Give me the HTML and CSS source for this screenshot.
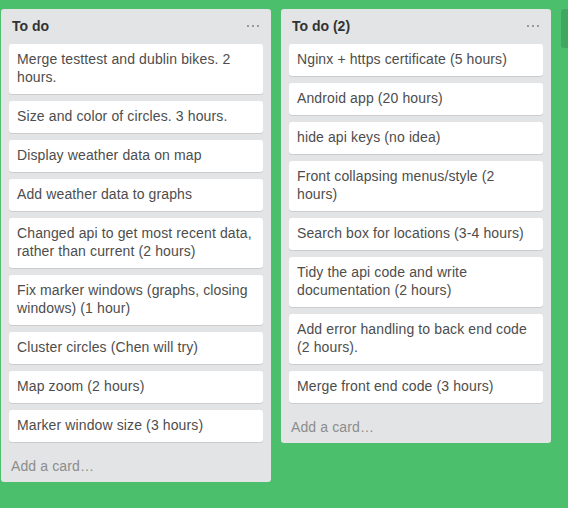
FILE: index.html
```html
<!DOCTYPE html>
<html>
<head>
<meta charset="utf-8">
<link rel="stylesheet" href="styles.css">
</head>
<body>
<div class="board">
  <div class="list">
    <div class="list-header"><span class="list-title">To do</span><svg class="list-menu" width="12" height="3" viewBox="0 0 12 3"><rect x="0" y="0" width="2" height="2"/><rect x="5" y="0" width="2" height="2"/><rect x="10" y="0" width="2" height="2"/></svg></div>
    <div class="cards">
      <div class="card">Merge testtest and dublin bikes. 2 hours.</div>
      <div class="card">Size and color of circles. 3 hours.</div>
      <div class="card">Display weather data on map</div>
      <div class="card">Add weather data to graphs</div>
      <div class="card">Changed api to get most recent data, rather than current (2 hours)</div>
      <div class="card">Fix marker windows (graphs, closing windows) (1 hour)</div>
      <div class="card">Cluster circles (Chen will try)</div>
      <div class="card">Map zoom (2 hours)</div>
      <div class="card">Marker window size (3 hours)</div>
    </div>
    <div class="composer">Add a card…</div>
  </div>
  <div class="list">
    <div class="list-header"><span class="list-title">To do (2)</span><svg class="list-menu" width="12" height="3" viewBox="0 0 12 3"><rect x="0" y="0" width="2" height="2"/><rect x="5" y="0" width="2" height="2"/><rect x="10" y="0" width="2" height="2"/></svg></div>
    <div class="cards">
      <div class="card">Nginx + https certificate (5 hours)</div>
      <div class="card">Android app (20 hours)</div>
      <div class="card">hide api keys (no idea)</div>
      <div class="card">Front collapsing menus/style (2 hours)</div>
      <div class="card">Search box for locations (3-4 hours)</div>
      <div class="card">Tidy the api code and write documentation (2 hours)</div>
      <div class="card">Add error handling to back end code (2 hours).</div>
      <div class="card">Merge front end code (3 hours)</div>
    </div>
    <div class="composer">Add a card…</div>
  </div>
  <div class="add-list"></div>
</div>
</body>
</html>
```

FILE: styles.css
```css
html, body {
  margin: 0;
  padding: 0;
}
body {
  background: #4bbf6b;
  font-family: "Liberation Sans", Arial, sans-serif;
  font-size: 14px;
  line-height: 18px;
  letter-spacing: 0.12px;
  overflow: hidden;
  height: 508px;
}
.board {
  display: flex;
  align-items: flex-start;
  gap: 10px;
  padding: 9px 0 0 1px;
}
.list {
  flex: 0 0 270px;
  width: 270px;
  background: #e2e4e6;
  border-radius: 3px;
}
.list-header {
  display: flex;
  justify-content: space-between;
  align-items: center;
  padding: 8px 12px 9px 11px;
}
.list-title {
  font-weight: bold;
  color: #333;
  letter-spacing: 0;
}
.list-menu {
  fill: #9a9a9a;
  margin-top: 1px;
}
.cards {
  display: flex;
  flex-direction: column;
  gap: 7px;
  padding: 0 8px;
}
.card {
  background: #fff;
  border-radius: 3px;
  box-shadow: 0 1px 0 #ccc;
  padding: 6px 8px 8px;
  color: #4d4d4d;
}
.composer {
  margin-top: 7px;
  padding: 8px 10px 7px;
  color: #8c8c8c;
}
.add-list {
  flex: 0 0 270px;
  height: 39px;
  background: rgba(0, 0, 0, 0.12);
  border-radius: 3px;
}
```
